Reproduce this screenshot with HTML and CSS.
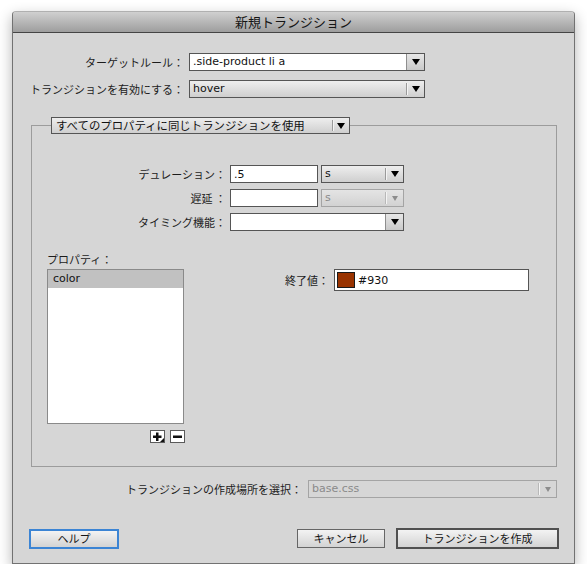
FILE: index.html
```html
<!DOCTYPE html>
<html lang="ja">
<head>
<meta charset="utf-8">
<title>新規トランジション</title>
<link rel="stylesheet" href="styles.css">
</head>
<body>
<div class="page">
  <div class="dialog">
    <div class="titlebar">新規トランジション</div>
    <div class="content">
      <div class="top-form">
        <div class="row">
          <span class="lbl top-lbl">ターゲットルール：</span>
          <div class="sel combo w-top">
            <span class="val">.side-product li a</span>
            <span class="arr"><i class="tri"></i></span>
          </div>
        </div>
        <div class="row">
          <span class="lbl top-lbl">トランジションを有効にする：</span>
          <div class="sel popup w-top">
            <span class="val">hover</span>
            <span class="arr"><i class="tri"></i></span>
          </div>
        </div>
      </div>

      <div class="group">
        <div class="sel popup group-head">
          <span class="val jp">すべてのプロパティに同じトランジションを使用</span>
          <span class="arr"><i class="tri"></i></span>
        </div>

        <div class="g-form">
          <div class="row g-row">
            <span class="lbl g-lbl">デュレーション：</span>
            <div class="field w-num"><span class="val">.5</span></div>
            <div class="sel popup w-unit">
              <span class="val">s</span>
              <span class="arr"><i class="tri"></i></span>
            </div>
          </div>
          <div class="row g-row">
            <span class="lbl g-lbl">遅延 ：</span>
            <div class="field w-num"></div>
            <div class="sel popup disabled w-unit">
              <span class="val">s</span>
              <span class="arr"><i class="tri"></i></span>
            </div>
          </div>
          <div class="row g-row">
            <span class="lbl g-lbl">タイミング機能：</span>
            <div class="sel combo w-timing">
              <span class="val"></span>
              <span class="arr"><i class="tri"></i></span>
            </div>
          </div>
        </div>

        <div class="props">
          <div class="props-left">
            <div class="lbl props-lbl">プロパティ：</div>
            <div class="listbox">
              <div class="item selected">color</div>
            </div>
            <div class="list-btns">
              <span class="sq-btn">
                <svg width="13" height="11" viewBox="0 0 13 11">
                  <path d="M5 1.5h2.5v3h3v2.5h-3v3H5v-3H2V4.5h3z" fill="#111"/>
                  <path d="M13 7v4H9z" fill="#111"/>
                </svg>
              </span>
              <span class="sq-btn">
                <svg width="13" height="11" viewBox="0 0 13 11">
                  <rect x="2" y="4.5" width="9" height="2.5" fill="#111"/>
                </svg>
              </span>
            </div>
          </div>
          <div class="endval">
            <span class="lbl">終了値：</span>
            <div class="color-field">
              <span class="swatch"></span>
              <span class="val">#930</span>
            </div>
          </div>
        </div>
      </div>

      <div class="row location">
        <span class="lbl">トランジションの作成場所を選択：</span>
        <div class="sel popup disabled flat w-loc">
          <span class="val">base.css</span>
          <span class="arr"><i class="tri"></i></span>
        </div>
      </div>

      <div class="buttons">
        <button class="btn help">ヘルプ</button>
        <span class="spacer"></span>
        <button class="btn cancel">キャンセル</button>
        <button class="btn create">トランジションを作成</button>
      </div>
    </div>
  </div>
</div>
</body>
</html>
```

FILE: styles.css
```css
* {
  box-sizing: border-box;
}

html,
body {
  margin: 0;
  padding: 0;
  background: #ffffff;
}

body {
  font-family: "DejaVu Sans", "Noto Sans CJK JP", sans-serif;
  font-size: 11px;
  color: #111111;
}

.page {
  padding: 11px 0 0 12px;
}

.dialog {
  width: 563px;
  height: 553px;
  background: #d6d6d6;
  border: 1px solid #727272;
  border-top-color: #b0b0b0;
  border-radius: 4px 4px 0 0;
  box-shadow: 0 5px 14px rgba(0, 0, 0, 0.3);
  display: flex;
  flex-direction: column;
}

.titlebar {
  height: 21px;
  border-bottom: 1px solid #454545;
  border-radius: 3px 3px 0 0;
  background: linear-gradient(#d0d0d0, #9e9e9e);
  text-align: center;
  font-family: "Noto Sans CJK JP", sans-serif;
  font-size: 13px;
  line-height: 20px;
  color: #151515;
}

.content {
  padding-top: 20px;
  display: flex;
  flex-direction: column;
}

.row {
  display: flex;
  align-items: center;
}

.lbl {
  font-family: "Noto Sans CJK JP", sans-serif;
  font-size: 11px;
  color: #1c1c1c;
  white-space: nowrap;
}

.top-form {
  display: flex;
  flex-direction: column;
  gap: 9px;
}

.top-lbl {
  width: 171px;
  margin-right: 5px;
  text-align: right;
}

.w-top {
  width: 236px;
}

/* select / popup controls */
.sel {
  height: 18px;
  border: 1px solid #555555;
  display: flex;
  align-items: stretch;
  background: linear-gradient(#eeeeee, #cfcfcf);
}

.sel .val {
  flex: 1;
  padding-left: 3px;
  line-height: 16px;
  white-space: nowrap;
  overflow: hidden;
}

.sel .arr {
  width: 18px;
  display: flex;
  align-items: center;
  justify-content: center;
}

.sel.popup .arr {
  border-left: 1px solid #9a9a9a;
  box-shadow: inset 1px 0 0 #f4f4f4;
  margin: 2px 0;
}

.sel.combo {
  background: #ffffff;
}

.sel.combo .arr {
  background: linear-gradient(#e6e6e6, #c9c9c9);
  border-left: 1px solid #8e8e8e;
}

.tri {
  display: block;
  width: 0;
  height: 0;
  border-left: 4px solid transparent;
  border-right: 4px solid transparent;
  border-top: 6px solid #000000;
}

.sel.disabled {
  border-color: #a4a4a4;
  background: linear-gradient(#e4e4e4, #d2d2d2);
  color: #8a8a8a;
}

.sel.disabled .tri {
  border-top-color: #8c8c8c;
  border-left-width: 3px;
  border-right-width: 3px;
  border-top-width: 5px;
}

.sel.disabled.flat {
  background: #d6d6d6;
}

.sel.disabled .arr {
  border-left-color: #b8b8b8;
}

/* group box */
.group {
  margin: 27px 0 0 18px;
  width: 526px;
  border: 1px solid #9c9c9c;
  padding-bottom: 23px;
}

.group-head {
  width: 299px;
  height: 17px;
  margin: -9px 0 0 19px;
}

.group-head .val {
  padding-left: 4px;
  font-family: "Noto Sans CJK JP", sans-serif;
  font-size: 11.4px;
  line-height: 15px;
}

.group-head .arr {
  width: 17px;
}

.g-form {
  margin-top: 31px;
  display: flex;
  flex-direction: column;
  gap: 6px;
}

.g-lbl {
  width: 194px;
  margin-right: 4px;
  text-align: right;
}

.field {
  height: 18px;
  border: 1px solid #555555;
  background: #ffffff;
  display: flex;
  align-items: center;
}

.field .val {
  padding-left: 3px;
}

.w-num {
  width: 88px;
  margin-right: 3px;
}

.w-unit {
  width: 83px;
}

.w-timing {
  width: 174px;
}

/* properties */
.props {
  display: flex;
  margin-top: 20px;
  padding-left: 15px;
}

.props-left {
  width: 138px;
  display: flex;
  flex-direction: column;
}

.props-lbl {
  line-height: 16px;
  margin-bottom: 2px;
}

.listbox {
  width: 137px;
  height: 155px;
  border: 1px solid #8a8a8a;
  background: #ffffff;
}

.item {
  height: 18px;
  line-height: 18px;
  padding-left: 5px;
}

.item.selected {
  background: #c1c1c1;
}

.list-btns {
  margin-top: 6px;
  display: flex;
  justify-content: flex-end;
  gap: 5px;
}

.sq-btn {
  width: 15px;
  height: 13px;
  border: 1px solid #5a5a5a;
  background: #ffffff;
  display: flex;
}

.endval {
  margin: 18px 27px 0 auto;
  align-self: flex-start;
  display: flex;
  align-items: center;
}

.color-field {
  margin-left: 5px;
  width: 195px;
  height: 22px;
  border: 1px solid #555555;
  background: #ffffff;
  display: flex;
  align-items: center;
  padding-left: 2px;
}

.swatch {
  width: 18px;
  height: 16px;
  background: #993300;
  border: 1px solid #1a1a1a;
  margin-right: 3px;
}

/* location */
.location {
  margin-top: 13px;
  justify-content: flex-end;
  padding-right: 17px;
}

.location .lbl {
  margin-right: 6px;
}

.w-loc {
  width: 249px;
}

/* buttons */
.buttons {
  margin-top: 30px;
  display: flex;
  align-items: center;
  padding: 0 15px 0 16px;
}

.spacer {
  flex: 1;
}

.btn {
  font-family: "Noto Sans CJK JP", sans-serif;
  font-size: 11px;
  color: #151515;
  padding: 0;
  background: linear-gradient(#f3f3f3, #d3d3d3);
  border: 1px solid #666666;
  border-radius: 0;
  line-height: 1;
}

.help {
  width: 90px;
  height: 20px;
  border: 2px solid #3b84d4;
}

.cancel {
  width: 88px;
  height: 19px;
  margin-right: 11px;
}

.create {
  width: 163px;
  height: 21px;
  border: 2px solid #505050;
}
```
